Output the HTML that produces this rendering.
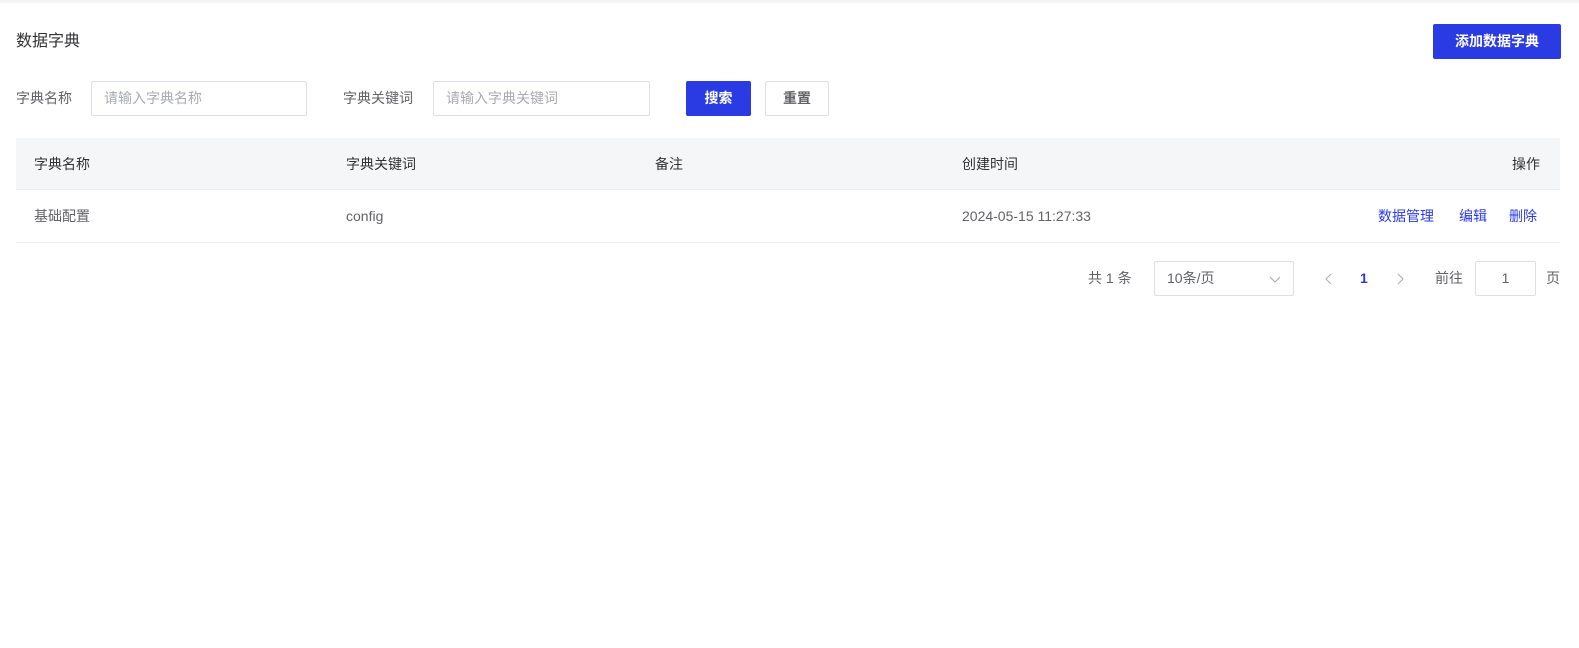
<!DOCTYPE html>
<html><head><meta charset="utf-8"><style>
*{box-sizing:border-box;margin:0;padding:0}
body{width:1579px;height:648px;background:#fff;font-family:"Liberation Sans","Noto Sans CJK SC",sans-serif;font-size:14px;color:#606266;position:relative;overflow:hidden}
.a{position:absolute;white-space:nowrap;line-height:20px}
.inp{position:absolute;border:1px solid #dcdfe6;border-radius:2px;background:#fff;color:#a8abb2;padding-left:12px;line-height:33px}
.btn{position:absolute;border-radius:2px;text-align:center;line-height:35px;font-weight:bold}
.blue{background:#2b3be3;color:#fff}
.link{color:#2b3be3}
</style></head><body>
<div class="a" style="left:0;top:0;width:1579px;height:3px;background:#f3f4f6"></div>
<div class="a" style="left:16px;top:31px;font-size:16px;color:#303133;line-height:22px">数据字典</div>
<div class="btn blue" style="left:1433px;top:24px;width:128px;height:35px;">添加数据字典</div>

<div class="a" style="left:16px;top:88px">字典名称</div>
<div class="inp" style="left:91px;top:81px;width:216px;height:35px">请输入字典名称</div>
<div class="a" style="left:343px;top:88px">字典关键词</div>
<div class="inp" style="left:433px;top:81px;width:217px;height:35px">请输入字典关键词</div>
<div class="btn blue" style="left:686px;top:81px;width:65px;height:35px">搜索</div>
<div class="btn" style="left:765px;top:81px;width:64px;height:35px;border:1px solid #dcdfe6;color:#606266;line-height:33px">重置</div>

<div class="a" style="left:16px;top:138px;width:1544px;height:52px;background:#f5f6f8;border-bottom:1px solid #ebeef5"></div>
<div class="a" style="left:34px;top:154px;color:#303133">字典名称</div>
<div class="a" style="left:346px;top:154px;color:#303133">字典关键词</div>
<div class="a" style="left:655px;top:154px;color:#303133">备注</div>
<div class="a" style="left:962px;top:154px;color:#303133">创建时间</div>
<div class="a" style="left:1512px;top:154px;color:#303133">操作</div>

<div class="a" style="left:16px;top:242px;width:1544px;height:1px;background:#ebeef5"></div>
<div class="a" style="left:34px;top:206px">基础配置</div>
<div class="a" style="left:346px;top:206px">config</div>
<div class="a" style="left:962px;top:206px">2024-05-15 11:27:33</div>
<div class="a link" style="left:1378px;top:206px">数据管理</div>
<div class="a link" style="left:1459px;top:206px">编辑</div>
<div class="a link" style="left:1509px;top:206px">删除</div>

<div class="a" style="left:1088px;top:268px">共 1 条</div>
<div class="inp" style="left:1154px;top:261px;width:140px;height:35px;color:#606266">10条/页
<svg style="position:absolute;right:12px;top:12px" width="12" height="10" viewBox="0 0 12 10"><path d="M1 3l5 5 5-5" fill="none" stroke="#a8abb2" stroke-width="1"/></svg></div>
<svg class="a" style="left:1325px;top:273px" width="8" height="12" viewBox="0 0 8 12"><path d="M6 1L1 6l5 5" fill="none" stroke="#a8abb2" stroke-width="1"/></svg>
<div class="a link" style="left:1360px;top:268px;font-weight:bold">1</div>
<svg class="a" style="left:1396px;top:273px" width="8" height="12" viewBox="0 0 8 12"><path d="M2 1l5 5-5 5" fill="none" stroke="#a8abb2" stroke-width="1"/></svg>
<div class="a" style="left:1435px;top:268px">前往</div>
<div class="inp" style="left:1475px;top:261px;width:61px;height:35px;color:#606266;padding:0;text-align:center">1</div>
<div class="a" style="left:1546px;top:268px">页</div>
</body></html>
